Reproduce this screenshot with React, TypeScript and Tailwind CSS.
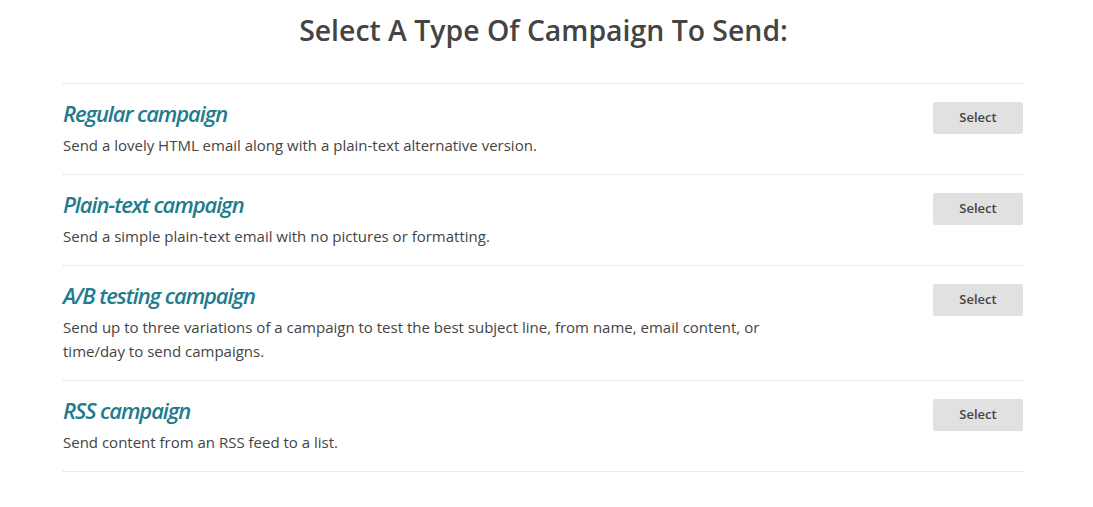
import React from 'react';

const campaigns = [
  {
    title: 'Regular campaign',
    text: 'Send a lovely HTML email along with a plain-text alternative version.',
  },
  {
    title: 'Plain-text campaign',
    text: 'Send a simple plain-text email with no pictures or formatting.',
  },
  {
    title: 'A/B testing campaign',
    text: 'Send up to three variations of a campaign to test the best subject line, from name, email content, or time/day to send campaigns.',
  },
  {
    title: 'RSS campaign',
    text: 'Send content from an RSS feed to a list.',
  },
];

function App() {
  return (
    <div className="min-h-screen bg-white font-['Open_Sans',sans-serif] text-[#444]">
      <h1 className="pt-[9px] pr-[6px] text-center text-[28.4px] font-semibold leading-[42px] text-[#444]">
        Select A Type Of Campaign To Send:
      </h1>
      <div className="ml-[63px] mt-[32px] w-[960px] border-t border-dotted border-[#d8d8d8]">
        {campaigns.map((c) => (
          <div
            key={c.title}
            className="flex items-start justify-between border-b border-dotted border-[#d8d8d8] pt-[14px] pb-[17px]"
          >
            <div className="max-w-[720px]">
              <h2 className="text-[22px] font-semibold italic leading-[30px] tracking-[-1.1px] text-[#227b8c]">
                {c.title}
              </h2>
              <p className="mt-[5px] text-[15px] leading-[24px] text-[#444]">{c.text}</p>
            </div>
            <button className="mt-[4px] h-[32px] w-[90px] rounded-[2px] bg-[#e1e1e1] text-[13px] font-semibold text-[#444]">
              Select
            </button>
          </div>
        ))}
      </div>
    </div>
  );
}

export default App;
